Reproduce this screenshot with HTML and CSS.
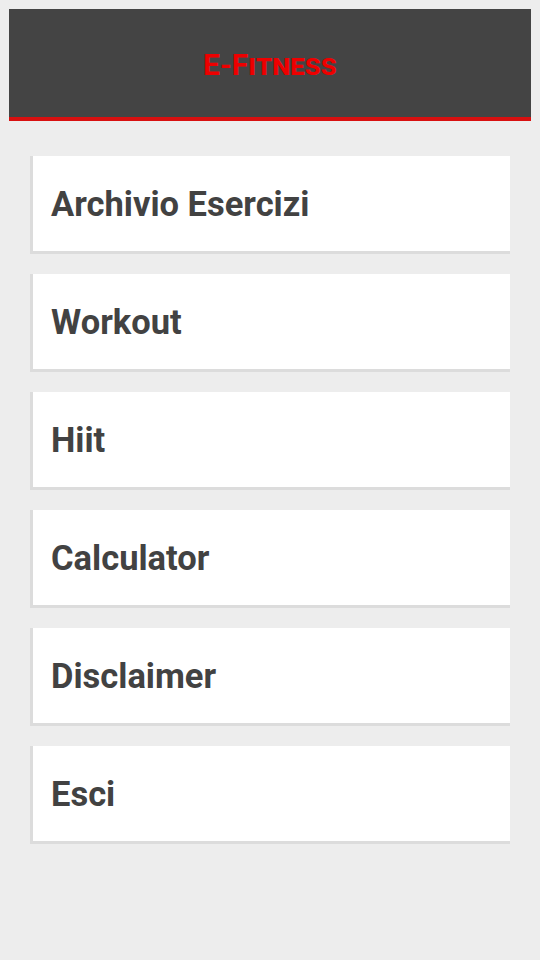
FILE: index.html
```html
<!doctype html>
<html>
  <head>
    <meta charset='utf-8'>
    <title>E-Fitness</title>
    <link rel="stylesheet" href="styles.css">
  </head>
  <body>

    <div id='header'>
      <div class='title'>E-Fitness</div>
    </div>

    <div id='menu'>
      <a class='item' href='#'>Archivio Esercizi</a>
      <a class='item' href='#'>Workout</a>
      <a class='item' href='#'>Hiit</a>
      <a class='item' href='#'>Calculator</a>
      <a class='item' href='#'>Disclaimer</a>
      <a class='item' href='#'>Esci</a>
    </div>

  </body>
</html>
```

FILE: styles.css
```css
*{
  box-sizing: border-box;
}

body {
  font-family: Roboto, 'Helvetica Neue', Arial, sans-serif;
  background: #ededed;
  margin: 0;
  padding: 9px;
}

#header {
  background: #444;
  border-bottom: 4px solid #d81010;
  height: 112px;
  display: flex;
  align-items: center;
  justify-content: center;
}

.title {
  color: #ee0000;
  font-weight: bold;
  font-size: 30px;
  font-variant: small-caps;
  padding-top: 2px;
}

#menu {
  margin: 35px 21px 0;
  display: flex;
  flex-direction: column;
  gap: 20px;
}

.item {
  display: flex;
  align-items: center;
  height: 98px;
  padding-left: 18px;
  background: #fff;
  border-left: 3px solid #dcdcdc;
  border-bottom: 3px solid #dcdcdc;
  color: #424242;
  font-size: 34.5px;
  font-weight: bold;
  text-decoration: none;
}
```
